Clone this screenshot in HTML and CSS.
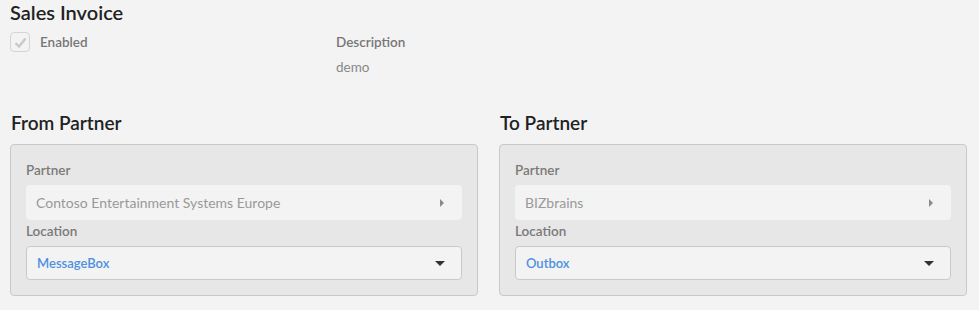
FILE: index.html
```html
<!DOCTYPE html>
<html lang="en">
<head>
  <meta charset="UTF-8" />
  <title>Sales Invoice</title>
  <link rel="stylesheet" href="styles.css">
</head>
<body>
  <h2 class="page-title">Sales Invoice</h2>

  <div class="meta-row">
    <div class="meta-col enabled-col">
      <span class="checkbox">
        <svg width="13" height="11" viewBox="0 0 13 11"><path d="M1.5 6 L5 9.5 L11.5 1.5" fill="none" stroke="#c9c9c9" stroke-width="2.4"/></svg>
      </span>
      <span class="meta-label">Enabled</span>
    </div>
    <div class="meta-col">
      <div class="meta-label">Description</div>
      <div class="meta-value">demo</div>
    </div>
  </div>

  <div class="partners">
    <!-- From side -->
    <div class="partner-section">
      <h3 class="section-title">From Partner</h3>
      <div class="panel">
        <div class="field-label">Partner</div>
        <div class="lookup">
          <span>Contoso Entertainment Systems Europe</span>
          <span class="arrow-right"></span>
        </div>
        <div class="field-label">Location</div>
        <div class="select">
          <span>MessageBox</span>
          <span class="caret"></span>
        </div>
      </div>
    </div>

    <!-- To side -->
    <div class="partner-section">
      <h3 class="section-title">To Partner</h3>
      <div class="panel">
        <div class="field-label">Partner</div>
        <div class="lookup">
          <span>BIZbrains</span>
          <span class="arrow-right"></span>
        </div>
        <div class="field-label">Location</div>
        <div class="select">
          <span>Outbox</span>
          <span class="caret"></span>
        </div>
      </div>
    </div>
  </div>
</body>
</html>
```

FILE: styles.css
```css
body {
  margin: 0;
  padding: 0 12px 0 10px;
  background-color: #f3f3f3;
  font-family: Lato, 'Open Sans', sans-serif;
  font-size: 13px;
  color: #777;
}
.page-title {
  margin: 0;
  padding-top: 1px;
  font-size: 20px;
  line-height: 22px;
  font-weight: 600;
  color: #222;
}
.meta-row {
  display: flex;
  margin-top: 9px;
}
.meta-col {
  line-height: 20px;
}
.enabled-col {
  width: 326px;
  display: flex;
  align-items: flex-start;
}
.checkbox {
  width: 18px;
  height: 18px;
  border: 1px solid #d4d4d4;
  border-radius: 4px;
  background-color: #f3f3f3;
  display: flex;
  align-items: center;
  justify-content: center;
  margin: 0 10px 0 0;
}
.meta-label {
  font-weight: 600;
  font-size: 13.5px;
  color: #777;
}
.meta-value {
  margin-top: 5px;
  font-size: 13.5px;
  color: #888;
}
.partners {
  display: grid;
  grid-template-columns: 1fr 1fr;
  column-gap: 21px;
  margin-top: 35px;
}
.section-title {
  margin: 0 0 10px 1px;
  font-size: 19px;
  line-height: 22px;
  font-weight: 600;
  color: #222;
}
.panel {
  background-color: #e7e7e7;
  border: 1px solid #c9c9c9;
  border-radius: 4px;
  padding: 15px;
}
.field-label {
  line-height: 20px;
  margin-bottom: 5px;
  font-weight: 600;
  font-size: 13.5px;
  color: #7a7a7a;
}
.lookup {
  height: 35px;
  background-color: #f3f3f3;
  border-radius: 4px;
  padding: 0 18px 0 10px;
  display: flex;
  align-items: center;
  justify-content: space-between;
  font-size: 14px;
  color: #999;
  margin-bottom: 1px;
}
.arrow-right {
  width: 0;
  height: 0;
  border-top: 4px solid transparent;
  border-bottom: 4px solid transparent;
  border-left: 4px solid #8a8a8a;
}
.select {
  height: 32px;
  background-color: #f3f3f3;
  border: 1px solid #c9c9c9;
  border-radius: 4px;
  padding: 0 16px 0 10px;
  display: flex;
  align-items: center;
  justify-content: space-between;
  color: #4d90e0;
  font-weight: 600;
}
.caret {
  width: 0;
  height: 0;
  border-left: 5px solid transparent;
  border-right: 5px solid transparent;
  border-top: 5px solid #333;
}
```
